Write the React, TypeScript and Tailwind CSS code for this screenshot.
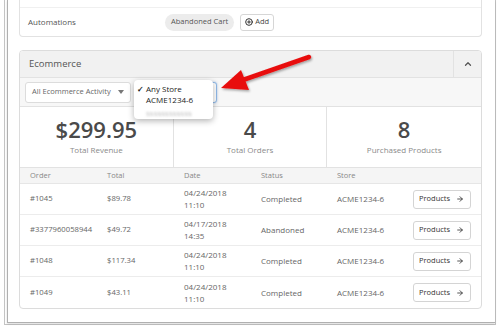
import { ChevronUp, PlusCircle, ArrowRight } from "lucide-react";

const orders = [
  { id: "#1045", total: "$89.78", date: "04/24/2018", time: "11:10", status: "Completed" },
  { id: "#3377960058944", total: "$49.72", date: "04/17/2018", time: "14:35", status: "Abandoned" },
  { id: "#1048", total: "$117.34", date: "04/24/2018", time: "11:10", status: "Completed" },
  { id: "#1049", total: "$43.11", date: "04/24/2018", time: "11:10", status: "Completed" },
];

const cols = "grid grid-cols-[77px_77px_77px_76px_76px_1fr] pl-[10px] items-center";

function Stat({ value, label, last = false }: { value: string; label: string; last?: boolean }) {
  return (
    <div className={"flex flex-col items-center pt-[8px] " + (last ? "" : "border-r border-[#e2e2e2]")}>
      <div className="text-[22px] leading-[28px] font-semibold text-[#4a4a4a]">{value}</div>
      <div className="text-[8px] leading-[11px] mt-[1px] text-[#8a8a8a]">{label}</div>
    </div>
  );
}

export default function App() {
  return (
    <div className="relative w-[500px] h-[326px] overflow-hidden bg-white font-['Open_Sans',sans-serif]">
      {/* window frame */}
      <div className="ml-[4px] w-[492px] h-[325px] border-l border-b border-r border-[#c4c4c4] pl-[2px] pb-[1px]">
        <div className="h-full border-l border-b border-[#b0b0b0] bg-white pl-[11px] pr-[13px] shadow-[0_1px_2px_rgba(0,0,0,0.15)]">
          {/* automations */}
          <div className="border border-t-0 border-[#e2e2e2] rounded-b-[4px]">
            <div className="h-[8px] border-b border-[#f0f0f0]"></div>
            <div className="h-[28px] flex items-center pl-[8px]">
              <span className="text-[8px] text-[#555] w-[137px]">Automations</span>
              <span className="text-[7.5px] text-[#555] bg-[#ececec] rounded-full px-[6px] h-[17px] flex items-center">
                Abandoned Cart
              </span>
              <button className="ml-[6px] h-[17px] px-[4px] flex items-center gap-[2px] border border-[#d6d6d6] rounded-[3px] text-[7.5px] text-[#444] bg-white">
                <PlusCircle size={8} strokeWidth={3} className="text-[#333]" />
                Add
              </button>
            </div>
          </div>

          {/* ecommerce */}
          <div className="mt-[13px] border border-[#dcdcdc] rounded-[4px] overflow-hidden">
            <div className="h-[27px] bg-[#f1f1f1] border-b border-[#e2e2e2] flex items-center">
              <span className="flex-1 pl-[9px] text-[9.5px] text-[#555]">Ecommerce</span>
              <div className="w-[28px] h-full border-l border-[#e2e2e2] flex items-center justify-center">
                <ChevronUp size={10} strokeWidth={3} className="text-[#555]" />
              </div>
            </div>

            <div className="h-[29px] bg-[#f7f7f7] border-b border-[#e2e2e2] flex items-center pl-[5px] gap-[8px]">
              <div className="w-[106px] h-[21px] bg-white border border-[#dcdcdc] rounded-[3px] flex items-center pl-[6px] pr-[6px]">
                <span className="flex-1 text-[7.5px] text-[#666]">All Ecommerce Activity</span>
                <svg width="6" height="4" viewBox="0 0 6 4">
                  <path d="M0 0h6L3 4z" fill="#777" />
                </svg>
              </div>
              <div className="relative w-[78px] h-[21px] bg-white border border-[#8fb8e6] rounded-[3px] shadow-[0_0_2px_rgba(80,140,220,0.5)]">
                <div className="absolute left-[-6px] top-[-3px] w-[79px] h-[39px] bg-white rounded-[4px] shadow-[0_2px_6px_rgba(0,0,0,0.3)] pt-[3px] text-[8px] leading-[11px] text-[#222] font-medium">
                  <div className="flex items-center pl-[3px]">
                    <span className="w-[9px] text-[8px] font-bold">✓</span>
                    <span>Any Store</span>
                  </div>
                  <div className="pl-[12px]">ACME1234-6</div>
                  <div className="pl-[12px] mt-[2px] text-[#bdbdbd] blur-[1px]">ssssssssssss</div>
                </div>
              </div>
            </div>

            <div className="h-[61px] grid grid-cols-3 border-b border-[#e2e2e2]">
              <Stat value="$299.95" label="Total Revenue" />
              <Stat value="4" label="Total Orders" />
              <Stat value="8" label="Purchased Products" last />
            </div>

            <div className={cols + " h-[16px] bg-[#f5f5f5] border-b border-[#e6e6e6] text-[7.5px] text-[#888]"}>
              <span>Order</span>
              <span>Total</span>
              <span>Date</span>
              <span>Status</span>
              <span>Store</span>
              <span></span>
            </div>

            {orders.map((o, i) => (
              <div
                key={o.id}
                className={
                  cols +
                  " h-[31px] text-[8px] text-[#666] " +
                  (i < orders.length - 1 ? "border-b border-[#ececec]" : "")
                }
              >
                <span className="text-[7.7px]">{o.id}</span>
                <span className="text-[7.7px]">{o.total}</span>
                <span className="leading-[12px]">
                  {o.date}
                  <br />
                  {o.time}
                </span>
                <span>{o.status}</span>
                <span>ACME1234-6</span>
                <div>
                  <button className="w-[58px] h-[19px] border border-[#d4d4d4] rounded-[3px] bg-white flex items-center justify-between pl-[5px] pr-[6px] text-[7.5px] text-[#333]">
                    Products
                    <ArrowRight size={8} strokeWidth={2.5} />
                  </button>
                </div>
              </div>
            ))}
          </div>
        </div>
      </div>

      {/* red callout arrow */}
      <svg className="absolute left-0 top-0 pointer-events-none" width="500" height="326">
        <defs>
          <filter id="sh" x="-20%" y="-20%" width="140%" height="140%">
            <feDropShadow dx="1" dy="1.5" stdDeviation="1.2" floodColor="#000" floodOpacity="0.35" />
          </filter>
        </defs>
        <g filter="url(#sh)">
          <line x1="309" y1="57" x2="240" y2="81" stroke="#e81010" strokeWidth="4.5" strokeLinecap="round" />
          <polygon points="221,88 241,70 249,90" fill="#e81010" />
        </g>
      </svg>
    </div>
  );
}
